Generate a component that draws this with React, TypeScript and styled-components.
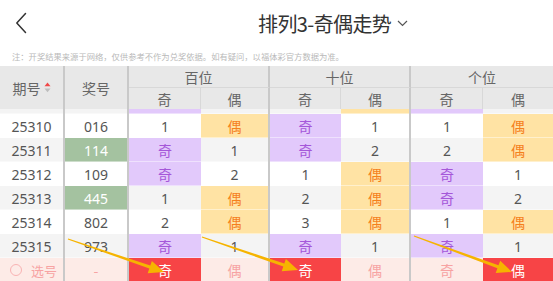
import React from 'react';
import styled, { createGlobalStyle, css } from 'styled-components';

const GlobalStyle = createGlobalStyle`
  html, body { margin: 0; padding: 0; background: #fff; }
  body { font-family: "Noto Sans", "Noto Sans CJK SC", sans-serif; }
  * { box-sizing: border-box; }
`;

const COLS = '65px 64px 72px 69px 71px 70px 72px 70px';
const SEP = '#c9c9c9';

const Page = styled.div`
  position: relative;
  width: 553px;
  height: 281px;
  overflow: hidden;
  background: #fff;
`;

const TopBar = styled.div`
  height: 46px;
  display: flex;
  align-items: center;
  padding-left: 15px;
`;

const Back = styled.svg`
  width: 12px;
  height: 22px;
  flex: none;
`;

const Title = styled.div`
  margin-left: 231px;
  display: flex;
  align-items: center;
  gap: 6px;
  font-family: "Noto Sans CJK SC", sans-serif;
  font-size: 20px;
  color: #333;
  letter-spacing: -0.6px;
`;

const Note = styled.div`
  height: 20px;
  line-height: 20px;
  padding-left: 12px;
  font-family: "Noto Sans CJK SC", sans-serif;
  font-size: 8.3px;
  color: #b9b9b9;
  white-space: nowrap;
`;

const Head = styled.div`
  display: grid;
  grid-template-columns: ${COLS};
  grid-template-rows: 22px 21px;
  background: #e8e8e8;
  color: #666;
  font-family: "Noto Sans CJK SC", sans-serif;
  font-size: 14px;
`;

const HeadCell = styled.div<{ $rows?: boolean; $span?: boolean; $thick?: boolean; $thin?: boolean }>`
  display: flex;
  align-items: center;
  justify-content: center;
  ${(p) => p.$rows && css`grid-row: span 2;`}
  ${(p) => p.$span && css`grid-column: span 2; border-bottom: 1px solid #d8d8d8;`}
  ${(p) => p.$thick && css`border-right: 2px solid ${SEP};`}
  ${(p) => p.$thin && css`border-right: 1px solid #d8d8d8;`}
`;

const Sort = styled.svg`
  width: 7px;
  height: 11px;
  margin-left: 3px;
`;

const Viewport = styled.div`
  height: 149px;
  overflow: hidden;
`;

const Scroller = styled.div`
  margin-top: -19px;
`;

const Row = styled.div<{ $gray: boolean }>`
  display: grid;
  grid-template-columns: ${COLS};
  height: 24px;
  background: ${(p) => (p.$gray ? '#f4f4f4' : '#fff')};
  font-size: 14px;
  color: #555;
`;

type Kind = 'odd' | 'even' | 'pair' | 'plain';

const Cell = styled.div<{ $kind?: Kind; $thick?: boolean }>`
  display: flex;
  align-items: center;
  justify-content: center;
  font-family: "Noto Sans", "Noto Sans CJK SC", sans-serif;
  box-shadow: inset 0 -1px 0 rgba(255, 255, 255, 0.45);
  ${(p) => p.$thick && css`border-right: 2px solid ${SEP};`}
  ${(p) =>
    p.$kind === 'odd' &&
    css`
      background: #e2c9fb;
      color: #a557d9;
    `}
  ${(p) =>
    p.$kind === 'even' &&
    css`
      background: #ffe3a4;
      color: #f5801c;
    `}
  ${(p) =>
    p.$kind === 'pair' &&
    css`
      background: #a4c2a0;
      color: #fff;
    `}
`;

const SelectRow = styled.div`
  display: grid;
  grid-template-columns: ${COLS};
  height: 24px;
  background: #fdebe7;
  color: #f7a3a3;
  font-family: "Noto Sans CJK SC", sans-serif;
  font-size: 14px;
`;

const SelectCell = styled.div<{ $on?: boolean; $thick?: boolean }>`
  display: flex;
  align-items: center;
  justify-content: center;
  ${(p) => p.$thick && css`border-right: 2px solid ${SEP};`}
  ${(p) =>
    p.$on &&
    css`
      background: #f74446;
      color: #fff;
    `}
`;

const PickLabel = styled(SelectCell)`
  justify-content: flex-start;
  padding-left: 10px;
  gap: 9px;
  font-size: 13px;
`;

const Ring = styled.span`
  width: 12px;
  height: 12px;
  border-radius: 50%;
  border: 1px solid #f9b3b3;
`;

const Overlay = styled.svg`
  position: absolute;
  left: 0;
  top: 0;
  width: 553px;
  height: 281px;
  pointer-events: none;
`;

type Val = 'odd' | 'even' | number;
type RowData = { issue: string; num: string; pair?: boolean; partial?: boolean; pos: [Val, Val][] };

const rows: RowData[] = [
  { issue: '25309', num: '547', partial: true, pos: [['odd', 2], [3, 'even'], ['odd', 1]] },
  { issue: '25310', num: '016', pos: [[1, 'even'], ['odd', 1], [1, 'even']] },
  { issue: '25311', num: '114', pair: true, pos: [['odd', 1], ['odd', 2], [2, 'even']] },
  { issue: '25312', num: '109', pos: [['odd', 2], [1, 'even'], ['odd', 1]] },
  { issue: '25313', num: '445', pair: true, pos: [[1, 'even'], [2, 'even'], ['odd', 2]] },
  { issue: '25314', num: '802', pos: [[2, 'even'], [3, 'even'], [1, 'even']] },
  { issue: '25315', num: '973', pos: [['odd', 1], ['odd', 1], ['odd', 1]] },
];

const picks = [true, false, true, false, false, true];

function arrow(x1: number, y1: number, x2: number, y2: number) {
  const dx = x2 - x1;
  const dy = y2 - y1;
  const len = Math.hypot(dx, dy);
  const ux = dx / len;
  const uy = dy / len;
  const px = -uy;
  const py = ux;
  const head = 15;
  const hw = 6.5;
  const bx = x2 - ux * head;
  const by = y2 - uy * head;
  const s0 = 0.5;
  const s1 = 1.6;
  const pts = [
    [x1 + px * s0, y1 + py * s0],
    [bx + px * s1, by + py * s1],
    [bx + px * hw, by + py * hw],
    [x2, y2],
    [bx - px * hw, by - py * hw],
    [bx - px * s1, by - py * s1],
    [x1 - px * s0, y1 - py * s0],
  ];
  return pts.map((p) => `${p[0].toFixed(1)},${p[1].toFixed(1)}`).join(' ');
}

const arrows: [number, number, number, number][] = [
  [68, 239, 164, 272],
  [202, 237, 298, 270],
  [414, 236, 512, 272],
];

function renderVal(v: Val, thick: boolean, key: string, partial?: boolean) {
  const kind: Kind = v === 'odd' ? 'odd' : v === 'even' ? 'even' : 'plain';
  const text = v === 'odd' ? '奇' : v === 'even' ? '偶' : String(v);
  return (
    <Cell key={key} $kind={kind} $thick={thick}>
      {partial ? null : text}
    </Cell>
  );
}

export default function App() {
  return (
    <Page>
      <GlobalStyle />
      <TopBar>
        <Back viewBox="0 0 12 22">
          <path d="M10.5 1.5 L1.8 11 L10.5 20.5" fill="none" stroke="#333" strokeWidth="1.5" strokeLinecap="round" strokeLinejoin="round" />
        </Back>
        <Title>
          排列3-奇偶走势
          <svg width="11" height="7" viewBox="0 0 11 7">
            <path d="M1 1 L5.5 5.5 L10 1" fill="none" stroke="#555" strokeWidth="1.2" />
          </svg>
        </Title>
      </TopBar>
      <Note>注：开奖结果来源于网络，仅供参考不作为兑奖依据。如有疑问，以福体彩官方数据为准。</Note>
      <Head>
        <HeadCell $rows $thick>
          期号
          <Sort viewBox="0 0 7 11">
            <path d="M3.5 0.5 L6.5 4.3 L0.5 4.3 Z" fill="#f04848" />
            <path d="M0.5 6.5 L6.5 6.5 L3.5 10.3 Z" fill="#bdbdbd" />
          </Sort>
        </HeadCell>
        <HeadCell $rows $thick>
          奖号
        </HeadCell>
        <HeadCell $span $thick>百位</HeadCell>
        <HeadCell $span $thick>十位</HeadCell>
        <HeadCell $span>个位</HeadCell>
        <HeadCell $thin>奇</HeadCell>
        <HeadCell $thick>偶</HeadCell>
        <HeadCell $thin>奇</HeadCell>
        <HeadCell $thick>偶</HeadCell>
        <HeadCell $thin>奇</HeadCell>
        <HeadCell>偶</HeadCell>
      </Head>
      <Viewport>
        <Scroller>
          {rows.map((r, i) => (
            <Row key={r.issue} $gray={i % 2 === 0}>
              <Cell $thick>{r.partial ? null : r.issue}</Cell>
              <Cell $thick $kind={r.pair ? 'pair' : 'plain'}>
                {r.partial ? null : r.num}
              </Cell>
              {r.pos.map((pair, j) => [
                renderVal(pair[0], false, `${j}a`, r.partial),
                renderVal(pair[1], j < 2, `${j}b`, r.partial),
              ])}
            </Row>
          ))}
        </Scroller>
      </Viewport>
      <SelectRow>
        <PickLabel $thick>
          <Ring />
          选号
        </PickLabel>
        <SelectCell $thick>-</SelectCell>
        {picks.map((on, j) => (
          <SelectCell key={j} $on={on} $thick={j === 1 || j === 3}>
            {j % 2 === 0 ? '奇' : '偶'}
          </SelectCell>
        ))}
      </SelectRow>
      <Overlay viewBox="0 0 553 281">
        {arrows.map((a, i) => (
          <polygon key={i} points={arrow(a[0], a[1], a[2], a[3])} fill="#f6b400" />
        ))}
      </Overlay>
    </Page>
  );
}
